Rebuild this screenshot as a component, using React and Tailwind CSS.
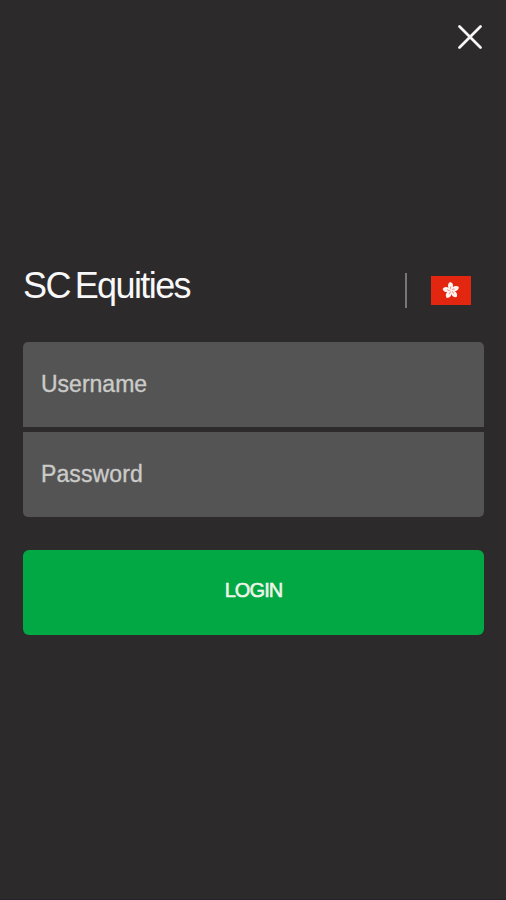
export default function App() {
  return (
    <main className="flex h-[900px] w-[506px] flex-col overflow-hidden border-b border-[#2a2029] bg-[#2d2a2b] pl-[23px] pr-[22px] pt-[25px] font-['Liberation_Sans',Arial,sans-serif]">
      <button aria-label="Close" className="ml-auto mr-0.5 block size-6">
        <svg viewBox="0 0 24 24" className="size-6" fill="none" stroke="#f7f7f7" strokeWidth="2.7" strokeLinecap="round">
          <path d="M1.5 1.5 22.5 22.5M22.5 1.5 1.5 22.5" />
        </svg>
      </button>
      <header className="mt-[217px] flex h-11 items-start">
        <h1 className="mt-px w-[382px] whitespace-nowrap text-[36px] leading-[38px] tracking-[-1.6px] text-[#f8f8f8] [word-spacing:-3.5px]">SC Equities</h1>
        <div className="mt-[7px] h-[35px] w-0.5 bg-[#777]" />
        <svg viewBox="0 0 40 29" className="ml-[23.5px] mt-[9.5px] h-[29px] w-10">
          <rect width="40" height="29" fill="#e32610" />
          {[-4, 68, 140, 212, 284].map((angle) => (
            <g key={angle} transform={`rotate(${angle} 20 14.5)`}>
              <path d="M20 15C16.8 12.5 16.3 8 19.5 6C23 6.8 23.6 11.4 20 15Z" fill="#fff3ef" />
              <path d="M20 13.5Q19 12 20 10.5" fill="none" stroke="#e32610" strokeWidth="0.45" />
            </g>
          ))}
        </svg>
      </header>
      <form className="mt-8 flex flex-col">
        <input aria-label="Username" placeholder="Username" className="h-[85px] rounded-t-[5px] bg-[#545454] px-[18px] text-[23px] text-[#cbcbc9] [-webkit-text-stroke:0.35px_#cbcbc9] placeholder:text-[#cbcbc9]" />
        <input aria-label="Password" placeholder="Password" className="mt-[5px] h-[85px] rounded-b-[5px] bg-[#545454] px-[18px] text-[23px] tracking-[0.1px] text-[#cbcbc9] [-webkit-text-stroke:0.35px_#cbcbc9] placeholder:text-[#cbcbc9]" />
        <button type="button" className="mt-[33px] h-[85px] rounded-[6px] bg-[#02a844] pb-[5px] text-[20px] tracking-[-0.9px] text-[#f0f5e9] [-webkit-text-stroke:0.55px_#f0f5e9]">LOGIN</button>
      </form>
    </main>
  );
}
